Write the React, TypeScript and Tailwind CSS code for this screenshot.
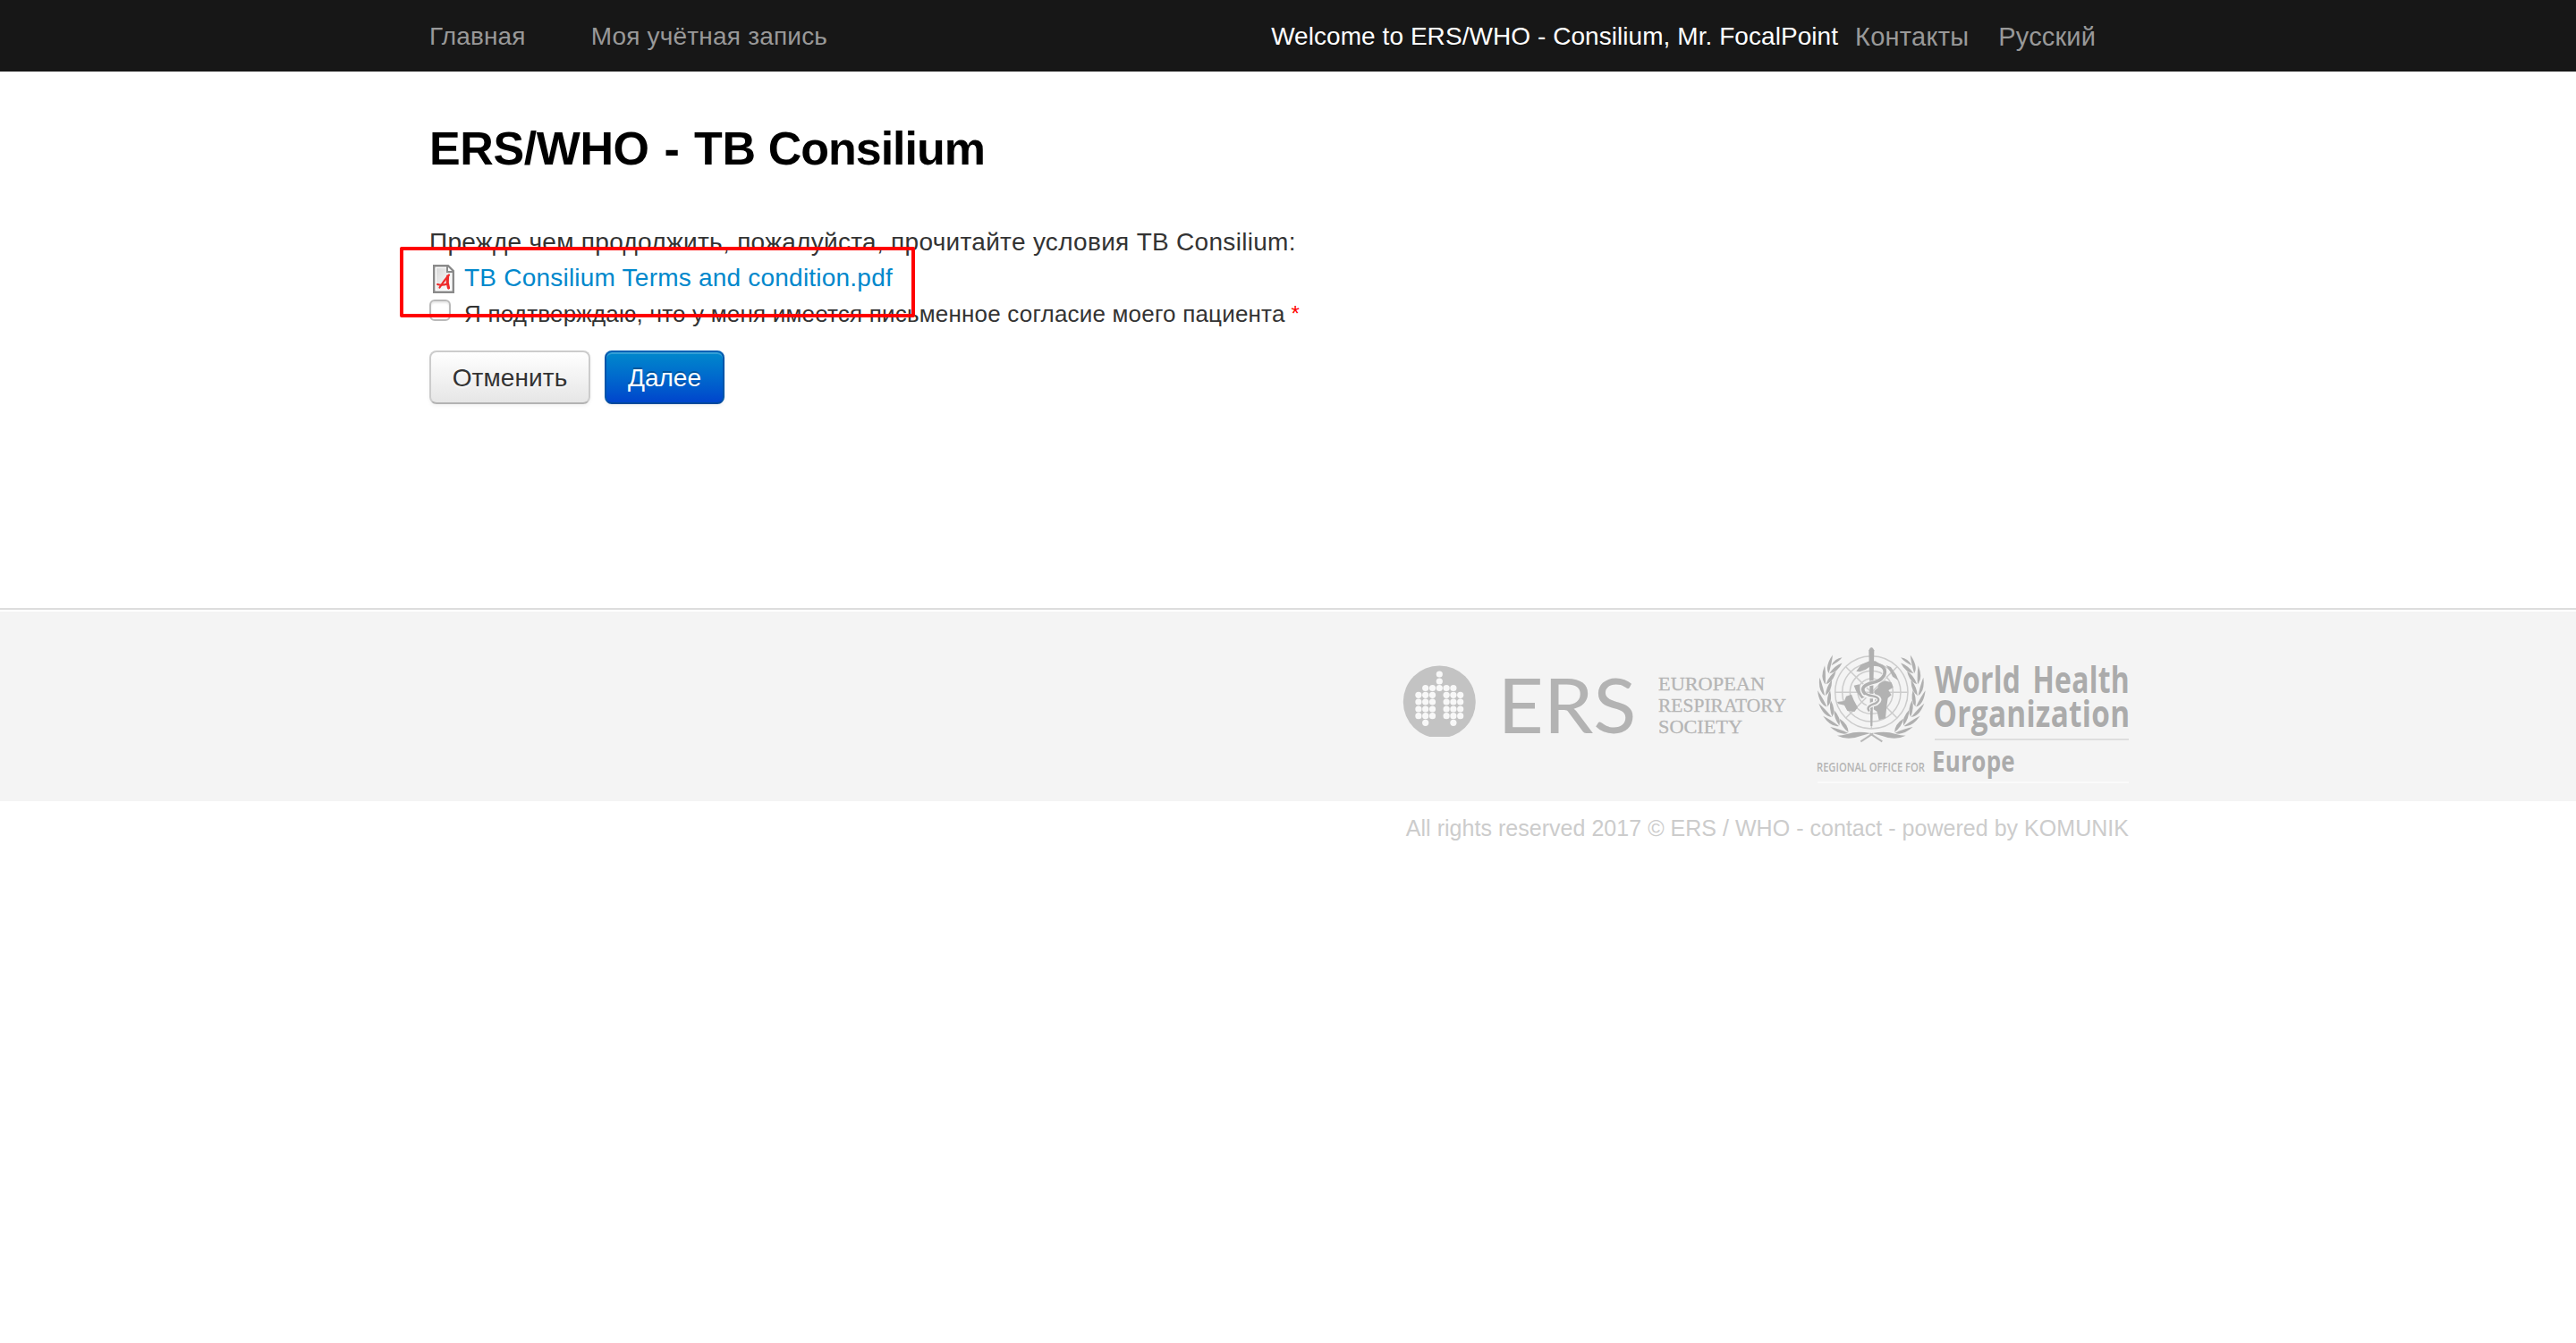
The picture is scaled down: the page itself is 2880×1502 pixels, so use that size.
const lungRows: [number, number[]][] = [
  [754, [0]],
  [762, [0]],
  [769.5, [-2, -1, 0, 1, 2]],
  [777.3, [-3, -2, -1, 1, 2, 3]],
  [785, [-3, -2, -1, 1, 2, 3]],
  [793, [-3, -2, -1, 1, 2, 3]],
  [800.7, [-3, -2, -1, 1, 2, 3]],
  [808.3, [-2, 2]],
];

function ErsLogo() {
  return (
    <svg className="block h-[120px] w-[436px]" viewBox="1566 724 436 120">
      <clipPath id="disc">
        <rect x="1566" y="742" width="90" height="82" />
      </clipPath>
      <circle cx="1609.3" cy="785" r="40.5" fill="#c3c3c3" clipPath="url(#disc)" />
      {lungRows.map(([y, cols]) =>
        cols.map((c) => <circle key={`${y}/${c}`} cx={1609.3 + c * 7.8} cy={y} r="3.6" fill="#f8f8f8" />),
      )}
      <g fill="#b3b3b3" fontFamily="Lato, sans-serif" fontSize="86">
        <text x="1674.5" y="819.5" textLength="155" lengthAdjust="spacingAndGlyphs">ERS</text>
      </g>
      <g fill="#b5b5b5" fontFamily="'Liberation Serif', serif" fontSize="21.5" stroke="#b5b5b5" strokeWidth="0.3">
        <text x="1854" y="772" textLength="119" lengthAdjust="spacingAndGlyphs">EUROPEAN</text>
        <text x="1854" y="796" textLength="143" lengthAdjust="spacingAndGlyphs">RESPIRATORY</text>
        <text x="1854" y="819.5" textLength="94" lengthAdjust="spacingAndGlyphs">SOCIETY</text>
      </g>
    </svg>
  );
}

function polar(deg: number, r: number) {
  const a = (deg * Math.PI) / 180;
  return `${(199 - r * Math.sin(a)).toFixed(1)} ${(175 + r * Math.cos(a)).toFixed(1)}`;
}

function Branch() {
  return (
    <g fill="#b0b0b0">
      {[33, 47, 61, 75, 89, 103, 117].map((a) => (
        <g key={a}>
          <path d={`M${polar(a - 3, 157)}Q${polar(a + 2, 180)} ${polar(a + 17, 181)}Q${polar(a + 10, 166)} ${polar(a - 3, 157)}Z`} />
          <path d={`M${polar(a - 3, 155)}Q${polar(a + 3, 132)} ${polar(a + 18, 139)}Q${polar(a + 9, 153)} ${polar(a - 3, 155)}Z`} />
        </g>
      ))}
      <path d={`M${polar(124, 162)}Q${polar(133, 168)} ${polar(140, 153)}Q${polar(133, 150)} ${polar(124, 162)}Z`} />
      <path d="M84 320Q120 338 166 320L196 312Q150 304 120 314Q100 320 84 320Z" />
      <path d="M163 340L204 313" stroke="#b8b8b8" strokeWidth="6" />
    </g>
  );
}

function WhoLogo() {
  return (
    <svg className="block h-[164px] w-[362px]" viewBox="2030 714 362 164">
      <g transform="translate(2026 716) scale(.33333)">
        <g fill="none" stroke="#cccccc" strokeWidth="4.5">
          <circle cx="199" cy="175" r="122" />
          <circle cx="199" cy="175" r="98" />
          <circle cx="199" cy="175" r="72" />
          <circle cx="199" cy="175" r="46" />
          <path d="M77 175H321M113 89L285 261M285 89L113 261M199 53V297" />
        </g>
        <g fill="#b2b2b2">
          <path d="M84 207L108 204L114 188L132 182L140 202L153 226L142 240L118 237L108 218L88 214Z" />
          <path d="M140 152L158 148L164 174L178 190L166 196L148 172Z" />
          <path d="M224 146L244 136L266 142L272 158L256 168L266 184L254 194L250 222L246 262L224 268L218 240L206 232L212 190L208 170L220 160Z" />
          <path d="M148 104L164 82L192 70L212 70L234 84L224 90L200 84L180 98L160 106Z" />
          <path d="M248 84L264 90L282 116L288 134L270 122L262 106Z" />
        </g>
        <Branch />
        <g transform="translate(398 0) scale(-1 1)">
          <Branch />
        </g>
        <path d="M190 34Q199 14 208 34L202 288H196Z" fill="#b0b0b0" />
        <g fill="none" strokeLinecap="round">
          <path d="M222 88Q252 98 240 122Q228 140 190 146Q158 158 174 180Q182 188 206 188Q238 196 214 212Q180 220 188 234" stroke="#f4f4f4" strokeWidth="16" />
          <path d="M206 80Q252 84 242 116Q232 138 196 144Q158 156 176 178" stroke="#b0b0b0" strokeWidth="11" />
          <path d="M176 178Q188 186 206 188Q236 196 212 212Q180 222 190 236" stroke="#b0b0b0" strokeWidth="7" />
        </g>
      </g>
      <g fill="#ababab" fontFamily="'Open Sans', sans-serif" fontWeight="700">
        <text x="2163" y="774.5" fontSize="42" wordSpacing="6" letterSpacing="0.4" textLength="218" lengthAdjust="spacingAndGlyphs">World Health</text>
        <text x="2161.5" y="812.5" fontSize="42" letterSpacing="0.4" textLength="220" lengthAdjust="spacingAndGlyphs">Organization</text>
        <text x="2160" y="862.5" fontSize="32" letterSpacing="0.4" textLength="93" lengthAdjust="spacingAndGlyphs">Europe</text>
        <text x="2031" y="863" fontSize="15" fontWeight="600" fill="#b4b4b4" textLength="121" lengthAdjust="spacingAndGlyphs">REGIONAL OFFICE FOR</text>
      </g>
      <rect x="2163" y="826" width="217" height="2" fill="#dedede" />
      <rect x="2032" y="874" width="348" height="2" fill="#fafafa" />
    </svg>
  );
}

function PdfIcon() {
  return (
    <svg className="block h-8 w-8" viewBox="0 0 32 32">
      <defs>
        <linearGradient id="paper" x1="0" y1="0" x2="1" y2="1">
          <stop offset="0" stopColor="#d9d9d9" />
          <stop offset="1" stopColor="#ffffff" />
        </linearGradient>
      </defs>
      <path d="M5.2 1.2H21L26.8 7V30.8H5.2Z" fill="#fff" stroke="#8a8a8a" strokeWidth="2.4" />
      <path d="M8 4H19V9H24V28H8Z" fill="url(#paper)" />
      <path d="M20 1.5V8H26.5" fill="none" stroke="#8a8a8a" strokeWidth="2" />
      <g fill="none" stroke="#ee2b2b" strokeLinecap="round">
        <path d="M22 11.5Q17 17 11.5 25.5" strokeWidth="2.2" />
        <path d="M20.5 13Q19.5 20 21.5 26" strokeWidth="3.2" />
        <path d="M9 22Q14 23.5 20.5 21.5" strokeWidth="2" />
      </g>
    </svg>
  );
}

export default function App() {
  return (
    <div className="min-h-[1502px] bg-white font-['Liberation_Sans',Arial,sans-serif] text-[28px] leading-10 text-[#333]">
      <nav className="h-20 bg-[#171717] leading-[82px] whitespace-nowrap text-[#999]">
        <div className="mx-auto flex w-[1920px] justify-between">
          <div className="flex gap-[73px]">
            <a className="tracking-[0.15px]">Главная</a>
            <a className="tracking-[0.2px]">Моя учётная запись</a>
          </div>
          <div className="flex pr-[57px]">
            <span className="mr-[19px] tracking-[0.06px] text-white">Welcome to ERS/WHO - Consilium, Mr. FocalPoint</span>
            <a className="mr-[33px] text-[29px] tracking-[0.25px]">Контакты</a>
            <a className="text-[29px] tracking-[0.15px]">Русский</a>
          </div>
        </div>
      </nav>

      <main className="mx-auto h-[600px] w-[1920px] pt-[46px]">
        <h1 className="h-[124px] text-[52px] leading-[80px] font-bold tracking-[-0.4px] text-black">
          <span className="[word-spacing:2.7px]">ERS/WHO - TB</span> <span className="tracking-[-1px]">Consilium</span>
        </h1>
        <div className="relative">
          <p className="h-10 pt-px tracking-[0.3px]">Прежде чем продолжить, пожалуйста, прочитайте условия TB Consilium:</p>
          <div className="flex h-10 gap-[7px]">
            <span className="pt-1.5">
              <PdfIcon />
            </span>
            <a className="pt-px tracking-[0.22px] text-[#0088cc]">TB Consilium Terms and condition.pdf</a>
          </div>
          <label className="flex h-10 text-[26px]">
            <span className="mt-[5px] mr-[15px] size-6 rounded-md border-2 border-[#b9b9b9] bg-white shadow-[inset_0_2px_2px_#e8e8e8]" />
            <span className="pt-px tracking-[0.2px]">Я подтверждаю, что у меня имеется письменное согласие моего пациента</span>
            <span className="ml-[7px] pt-px text-[24px] text-[#ff0000]">*</span>
          </label>
          <div className="absolute top-[26px] -left-[33px] h-[79px] w-[576px] rounded-[2px] border-4 border-[#ff0000]" />
        </div>
        <div className="mt-[22px] flex gap-4">
          <button className="h-[60px] w-[180px] rounded-lg border-2 border-[#ccc] border-b-[#b3b3b3] bg-linear-to-b from-white to-[#e6e6e6] leading-[56px] tracking-[0.1px] shadow-[inset_0_2px_0_rgba(255,255,255,.2),0_2px_4px_rgba(0,0,0,.05)] [text-shadow:0_2px_2px_rgba(255,255,255,.75)]">
            <span className="relative top-px">Отменить</span>
          </button>
          <button className="h-[60px] w-[134px] rounded-lg border-2 border-[#0055aa] border-t-[#0061b6] border-b-[#004a9c] bg-linear-to-b from-[#0088cc] to-[#0044cc] leading-[56px] text-white shadow-[inset_0_2px_0_rgba(255,255,255,.2),0_2px_4px_rgba(0,0,0,.05)] [text-shadow:0_-2px_0_rgba(0,0,0,.25)]">
            <span className="relative top-px">Далее</span>
          </button>
        </div>
      </main>

      <footer>
        <div className="h-[216px] border-t-2 border-[#ddd] bg-[#f4f4f4] shadow-[inset_0_2px_0_#fff]">
          <div className="mx-auto flex w-[1920px] justify-end pt-8 pr-2">
            <div className="mr-7 pt-2.5">
              <ErsLogo />
            </div>
            <WhoLogo />
          </div>
        </div>
        <p className="mx-auto w-[1920px] pt-[10px] pr-5 text-right text-[25px] tracking-[0.03px] text-[#ccc]">
          All rights reserved 2017 © ERS / WHO - contact - powered by KOMUNIK
        </p>
      </footer>
    </div>
  );
}
